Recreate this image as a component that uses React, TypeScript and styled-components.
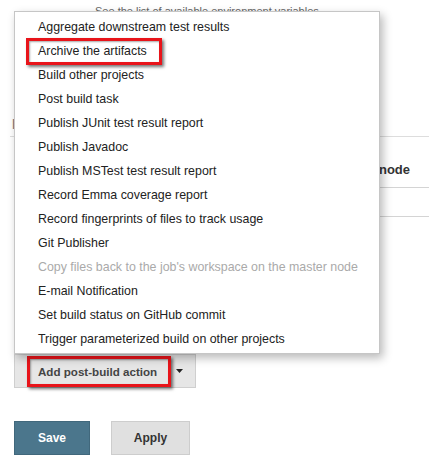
import { createGlobalStyle } from "styled-components";
import styled from "styled-components";

const GlobalStyle = createGlobalStyle`
  html, body {
    margin: 0;
    padding: 0;
    background: #fff;
  }
  body {
    font-family: "Liberation Sans", Arial, sans-serif;
    color: #333;
  }
`;

const menuItems: { label: string; disabled?: boolean; highlight?: boolean }[] = [
  { label: "Aggregate downstream test results" },
  { label: "Archive the artifacts", highlight: true },
  { label: "Build other projects" },
  { label: "Post build task" },
  { label: "Publish JUnit test result report" },
  { label: "Publish Javadoc" },
  { label: "Publish MSTest test result report" },
  { label: "Record Emma coverage report" },
  { label: "Record fingerprints of files to track usage" },
  { label: "Git Publisher" },
  { label: "Copy files back to the job's workspace on the master node", disabled: true },
  { label: "E-mail Notification" },
  { label: "Set build status on GitHub commit" },
  { label: "Trigger parameterized build on other projects" },
];

const Page = styled.div`
  position: relative;
  width: 429px;
  height: 466px;
  overflow: hidden;
`;

const HelpLink = styled.div`
  padding: 5px 0 0 95px;
  height: 11px;
  line-height: 13px;
  font-size: 11px;
  color: #666;
  white-space: nowrap;
`;

const SectionHeader = styled.div`
  margin: 100px 0 0 10px;
  padding: 0 0 4px 2px;
  height: 16px;
  font-size: 14px;
  font-weight: bold;
  color: #8a7f84;
  border-bottom: 1px solid #ddd;
`;

const TableRow = styled.div<{ $height: number }>`
  margin-left: 40px;
  height: ${(p) => p.$height}px;
  display: flex;
  align-items: flex-end;
  justify-content: flex-end;
  padding-right: 19px;
  border-bottom: 1px solid #d4d4d4;
  font-size: 13px;
  font-weight: bold;
  color: #333;
`;

const RowLabel = styled.span`
  padding-bottom: 10px;
  white-space: nowrap;
`;

const ActionRow = styled.div`
  margin: 137px 0 0 14px;
  display: flex;
`;

const SplitButton = styled.div`
  display: flex;
  align-items: center;
  height: 32px;
  width: 180px;
  background: #e6e6e6;
  border: 1px solid #cfcfcf;
`;

const SplitMain = styled.span`
  position: relative;
  margin-left: 23px;
  font-size: 11.6px;
  font-weight: bold;
  color: #444;
  white-space: nowrap;
`;

const Callout = styled.span<{ $t: number; $r: number; $b: number; $l: number }>`
  position: absolute;
  top: ${(p) => -p.$t}px;
  right: ${(p) => -p.$r}px;
  bottom: ${(p) => -p.$b}px;
  left: ${(p) => -p.$l}px;
  border: 3px solid #e8141a;
  box-shadow: 2px 2px 3px rgba(0, 0, 0, 0.55), inset 1px 1px 2px rgba(0, 0, 0, 0.35);
  pointer-events: none;
`;

const Caret = styled.svg`
  margin-left: auto;
  margin-right: 12px;
`;

const FormButtons = styled.div`
  margin: 33px 0 0 14px;
  display: flex;
  gap: 21px;
`;

const FormButton = styled.button<{ $primary?: boolean }>`
  height: 34px;
  width: ${(p) => (p.$primary ? 76 : 79)}px;
  padding: 0;
  font-family: "Liberation Sans", Arial, sans-serif;
  font-size: 12px;
  font-weight: bold;
  color: ${(p) => (p.$primary ? "#fff" : "#333")};
  background: ${(p) => (p.$primary ? "#4b768c" : "#e0e0e0")};
  border: 1px solid ${(p) => (p.$primary ? "#41687c" : "#cdcdcd")};
`;

const Menu = styled.ul`
  position: absolute;
  top: 11px;
  left: 14px;
  width: 364px;
  margin: 0;
  padding: 3px 0 2px;
  list-style: none;
  background: #fff;
  border: 1px solid #c6c6c6;
  box-shadow: 3px 4px 9px rgba(0, 0, 0, 0.28);
`;

const MenuItem = styled.li<{ $disabled?: boolean }>`
  height: 24px;
  line-height: 24px;
  padding-left: 23px;
  font-size: 12.4px;
  color: ${(p) => (p.$disabled ? "#aaa" : "#222")};
  white-space: nowrap;
`;

const ItemText = styled.span`
  position: relative;
`;

export default function App() {
  return (
    <Page>
      <GlobalStyle />
      <HelpLink>See the list of available environment variables</HelpLink>
      <SectionHeader>Post-build Actions</SectionHeader>
      <TableRow $height={50}>
        <RowLabel>node</RowLabel>
      </TableRow>
      <TableRow $height={28} />
      <ActionRow>
        <SplitButton>
          <SplitMain>
            Add post-build action
            <Callout $t={9} $r={14} $b={9} $l={11} />
          </SplitMain>
          <Caret width="7" height="4" viewBox="0 0 7 4">
            <path d="M0 0h7L3.5 4z" fill="#222" />
          </Caret>
        </SplitButton>
      </ActionRow>
      <FormButtons>
        <FormButton $primary>Save</FormButton>
        <FormButton>Apply</FormButton>
      </FormButtons>
      <Menu>
        {menuItems.map((item) => (
          <MenuItem key={item.label} $disabled={item.disabled}>
            <ItemText>
              {item.label}
              {item.highlight && <Callout $t={6} $r={15} $b={7} $l={12} />}
            </ItemText>
          </MenuItem>
        ))}
      </Menu>
    </Page>
  );
}
